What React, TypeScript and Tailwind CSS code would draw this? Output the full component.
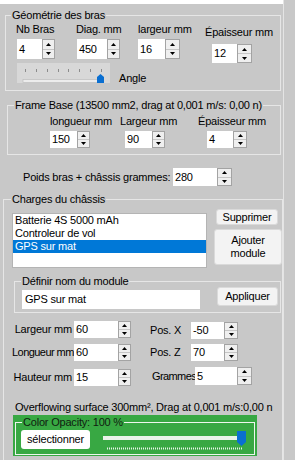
import React from "react";

function Up() {
  return (
    <svg width="5" height="3" viewBox="0 0 5 3">
      <polygon points="0,3 2.5,0 5,3" fill="#000" />
    </svg>
  );
}
function Down() {
  return (
    <svg width="5" height="3" viewBox="0 0 5 3">
      <polygon points="0,0 5,0 2.5,3" fill="#000" />
    </svg>
  );
}

function Spin({ v, w, s, h, extra }: { v: string; w: string; s: string; h: string; extra?: string }) {
  return (
    <div className={`flex shrink-0 ${h} ${extra ?? ""}`}>
      <div className={`${w} bg-white pl-[2px] flex items-center`}>{v}</div>
      <div className={`${s} border border-[#a3a3a3] bg-[#efefef] flex flex-col`}>
        <div className="flex-1 flex items-center justify-center border-b border-[#c6c6c6]">
          <Up />
        </div>
        <div className="flex-1 flex items-center justify-center">
          <Down />
        </div>
      </div>
    </div>
  );
}

function Btn({ children, cls }: { children: React.ReactNode; cls: string }) {
  return (
    <div className={`bg-[#f3f3f3] border border-[#dadada] rounded-[3px] flex items-center justify-center text-center ${cls}`}>
      {children}
    </div>
  );
}

export default function App() {
  return (
    <div className="w-[295px] h-[460px] overflow-hidden bg-[#c8c8c8] flex text-[11px] leading-[13px] tracking-[-0.2px] text-black font-['Liberation_Sans',Arial,sans-serif]">
      <div className="w-[284px] shrink-0 flex flex-col border-r border-[#e4e4e4]">
        <div className="h-[4px] bg-white shrink-0" />

        {/* Géométrie des bras */}
        <fieldset className="ml-[5px] mr-[2px] mt-[5px] border border-[#e6e6e6] pb-[5px] shrink-0">
          <legend className="ml-[5px] px-[1px]">Géométrie des bras</legend>
          <div className="flex pl-[10px] mt-[1px]">
            <div className="w-[60px] flex flex-col">
              <div>Nb Bras</div>
              <Spin v="4" w="w-[25px]" s="w-[13px]" h="h-[20px]" extra="mt-[3px] ml-[1px]" />
            </div>
            <div className="w-[62px] flex flex-col">
              <div>Diag. mm</div>
              <Spin v="450" w="w-[30px]" s="w-[13px]" h="h-[20px]" extra="mt-[3px] ml-[1px]" />
            </div>
            <div className="w-[67px] flex flex-col">
              <div>largeur mm</div>
              <Spin v="16" w="w-[27px]" s="w-[15px]" h="h-[20px]" extra="mt-[3px]" />
            </div>
            <div className="flex flex-col">
              <div className="mt-[3px]">Épaisseur mm</div>
              <Spin v="12" w="w-[25px]" s="w-[15px]" h="h-[19px]" extra="mt-[5px] ml-[7px]" />
            </div>
          </div>
          <div className="flex items-start pl-[11px]">
            <svg width="93" height="20" viewBox="0 0 93 20" className="shrink-0">
              <rect x="0" y="0" width="93" height="20" fill="#d8d8d8" />
              {[8, 19, 30, 41, 51, 62, 73, 84].map((x) => (
                <line key={x} x1={x + 0.5} y1="6" x2={x + 0.5} y2="9" stroke="#8c8c8c" strokeWidth="1" />
              ))}
              <rect x="6" y="16.5" width="78" height="3" fill="#ececec" stroke="#b8b8b8" strokeWidth="0.6" />
              <polygon points="80,14 83.5,11 87,14 87,20 80,20" fill="#0a6fd1" />
            </svg>
            <div className="ml-[9px] mt-[9px]">Angle</div>
          </div>
        </fieldset>

        {/* Frame Base */}
        <fieldset className="ml-[7px] mr-[2px] mt-[8px] border border-[#e6e6e6] pb-[6px] shrink-0">
          <legend className="ml-[6px] px-[1px] whitespace-nowrap">Frame Base (13500 mm2, drag at 0,001 m/s: 0,00 n)</legend>
          <div className="flex pl-[42px] mt-[3px]">
            <div className="w-[70px] flex flex-col">
              <div>longueur mm</div>
              <Spin v="150" w="w-[27px]" s="w-[13px]" h="h-[17px]" extra="mt-[3px]" />
            </div>
            <div className="w-[78px] flex flex-col">
              <div>Largeur mm</div>
              <Spin v="90" w="w-[27px]" s="w-[13px]" h="h-[17px]" extra="mt-[3px] ml-[5px]" />
            </div>
            <div className="flex flex-col">
              <div>Épaisseur mm</div>
              <Spin v="4" w="w-[26px]" s="w-[14px]" h="h-[17px]" extra="mt-[3px] ml-[9px]" />
            </div>
          </div>
        </fieldset>

        {/* Poids */}
        <div className="flex items-center mt-[13px] shrink-0">
          <div className="ml-[23px] w-[150px] whitespace-nowrap">Poids bras + châssis grammes:</div>
          <Spin v="280" w="w-[44px]" s="w-[15px]" h="h-[18px]" />
        </div>

        {/* Charges du châssis */}
        <fieldset className="ml-[3px] mt-[7px] border border-[#e6e6e6] pb-[24px] shrink-0">
          <legend className="ml-[7px] px-[1px]">Charges du châssis</legend>
          <div className="flex items-start mt-[3px]">
            <div className="ml-[8px] mt-[4px] w-[195px] h-[55px] bg-white border border-[#b4b4b4] flex flex-col">
              <div className="h-[13px] pl-[2px] whitespace-nowrap">Batterie 4S 5000 mAh</div>
              <div className="h-[13px] pl-[2px] whitespace-nowrap">Controleur de vol</div>
              <div className="h-[13px] pl-[2px] whitespace-nowrap bg-[#0078d7] text-white">GPS sur mat</div>
            </div>
            <div className="ml-[7px] flex flex-col">
              <Btn cls="ml-[2px] w-[62px] h-[16px]">Supprimer</Btn>
              <Btn cls="mt-[4px] w-[68px] h-[36px]">
                Ajouter
                <br />
                module
              </Btn>
            </div>
          </div>

          {/* Définir nom du module */}
          <fieldset className="ml-[10px] mr-[1px] mt-[7px] border border-[#e6e6e6] pb-[3px]">
            <legend className="ml-[6px] px-[1px]">Définir nom du module</legend>
            <div className="flex items-start">
              <div className="ml-[7px] mt-[2px] w-[178px] h-[19px] bg-white pl-[3px] flex items-center">GPS sur mat</div>
              <Btn cls="ml-[17px] -mt-[1px] w-[61px] h-[19px]">Appliquer</Btn>
            </div>
          </fieldset>

          {/* Parameters */}
          <div className="flex mt-[8px]">
            <div className="flex flex-col">
              <div className="flex items-center">
                <div className="w-[68px] text-right whitespace-nowrap">Largeur mm</div>
                <Spin v="60" w="w-[44px]" s="w-[13px]" h="h-[17px]" extra="ml-[2px]" />
              </div>
              <div className="flex items-center mt-[6px]">
                <div className="w-[70px] pl-[8px] whitespace-nowrap tracking-[-0.55px]">Longueur mm</div>
                <Spin v="60" w="w-[44px]" s="w-[13px]" h="h-[17px]" />
              </div>
              <div className="flex items-center mt-[8px]">
                <div className="w-[68px] text-right whitespace-nowrap">Hauteur mm</div>
                <Spin v="15" w="w-[44px]" s="w-[13px]" h="h-[17px]" extra="ml-[2px]" />
              </div>
            </div>
            <div className="flex flex-col ml-[19px]">
              <div className="flex items-center mt-[1px]">
                <div className="w-[41px] whitespace-nowrap">Pos. X</div>
                <Spin v="-50" w="w-[33px]" s="w-[14px]" h="h-[17px]" />
              </div>
              <div className="flex items-center mt-[5px]">
                <div className="w-[41px] whitespace-nowrap">Pos. Z</div>
                <Spin v="70" w="w-[33px]" s="w-[14px]" h="h-[17px]" />
              </div>
              <div className="flex items-center mt-[6px]">
                <div className="w-[43px] ml-[2px] whitespace-nowrap tracking-[-0.6px]">Grammes</div>
                <Spin v="5" w="w-[42px]" s="w-[15px]" h="h-[18px]" />
              </div>
            </div>
          </div>

          <div className="ml-[11px] mt-[15px] whitespace-nowrap">Overflowing surface 300mm², Drag at 0,001 m/s:0,00 n</div>

          {/* Color opacity */}
          <div className="ml-[9px] mt-[1px] w-[244px] h-[41px] bg-[#38a843] pt-[1px]">
            <fieldset className="mx-[2px] border border-[#eef6ee] pb-[4px]">
              <legend className="ml-[6px] px-[1px] text-[#102010]">Color Opacity: 100 %</legend>
              <div className="flex items-start mt-[1px]">
                <div className="ml-[5px] w-[69px] h-[19px] bg-white rounded-[3px] flex items-center justify-center">sélectionner</div>
                <svg width="145" height="20" viewBox="0 0 145 20" className="ml-[13px] shrink-0">
                  <rect x="0" y="6" width="138" height="4" fill="#e9f3e9" />
                  <line x1="4" y1="18.5" x2="140" y2="18.5" stroke="#e9f3e9" strokeWidth="2" strokeDasharray="1 1" />
                  <polygon points="134,1 143,1 143,12 138.5,16 134,12" fill="#0a6fd1" />
                </svg>
              </div>
            </fieldset>
          </div>
        </fieldset>
      </div>
      <div className="flex-1 bg-[#c8c8c8]" />
    </div>
  );
}
